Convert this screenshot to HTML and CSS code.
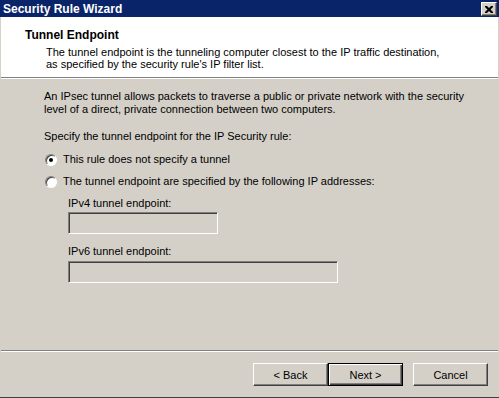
FILE: index.html
```html
<!DOCTYPE html>
<html lang="en">
<head>
<meta charset="UTF-8">
<title>Security Rule Wizard</title>
<link rel="stylesheet" href="styles.css">
</head>
<body>

  <div class="window">
    <div class="titlebar">
      <span class="title">Security Rule Wizard</span>
      <button class="close-btn">
        <svg width="8" height="7" viewBox="0 0 8 7"><path d="M0 0h2l2 2 2-2h2v1l-2.5 2.5L8 6v1H6L4 5 2 7H0V6l2.5-2.5L0 1z" fill="#000"/></svg>
      </button>
    </div>

    <div class="header">
      <div class="header-title">Tunnel Endpoint</div>
      <div class="header-desc">
        The tunnel endpoint is the tunneling computer closest to the IP traffic destination,<br>
        as specified by the security rule's IP filter list.
      </div>
    </div>
    <div class="separator"></div>

    <div class="content">
      <p class="intro">
        An IPsec tunnel allows packets to traverse a public or private network with the security<br>
        level of a direct, private connection between two computers.
      </p>
      <p class="prompt">Specify the tunnel endpoint for the IP Security rule:</p>

      <label class="radio-row first">
        <span class="radio checked"></span>
        This rule does not specify a tunnel
      </label>
      <label class="radio-row">
        <span class="radio"></span>
        The tunnel endpoint are specified by the following IP addresses:
      </label>

      <div class="fields">
        <div class="field-label">IPv4 tunnel endpoint:</div>
        <div class="textbox short"></div>
        <div class="field-label second">IPv6 tunnel endpoint:</div>
        <div class="textbox long"></div>
      </div>
    </div>

    <div class="separator"></div>
    <div class="footer">
      <button class="button">&lt; Back</button>
      <button class="button default">Next &gt;</button>
      <button class="button cancel">Cancel</button>
    </div>
  </div>

</body>
</html>
```

FILE: styles.css
```css
body {
  margin: 0;
  font-family: "Liberation Sans", Arial, sans-serif;
  font-size: 11px;
  color: #000;
}

.window {
  width: 499px;
  height: 398px;
  box-sizing: border-box;
  background-color: #d4d0c8;
  border-bottom: 1px solid #404040;
  display: flex;
  flex-direction: column;
}

.titlebar {
  height: 17px;
  background-color: #0a246a;
  color: white;
  display: flex;
  justify-content: space-between;
  align-items: center;
  padding: 0 2px 0 3px;
}
.title {
  font-weight: bold;
  font-size: 12px;
}
.close-btn {
  width: 16px;
  height: 14px;
  padding: 0;
  margin-top: 1px;
  background-color: #d4d0c8;
  border: 1px solid;
  border-color: #fff #404040 #404040 #fff;
  box-shadow: inset -1px -1px 0 #808080;
  display: flex;
  align-items: center;
  justify-content: center;
}

.header {
  height: 60px;
  box-sizing: border-box;
  background-color: white;
  padding: 12px 0 0 24px;
  line-height: 12px;
  margin: 0 1px;
}
.header-title {
  font-weight: bold;
  font-size: 12px;
}
.header-desc {
  margin-top: 5px;
  padding-left: 21px;
  white-space: nowrap;
}

.separator {
  height: 1px;
  background-color: #808080;
  border-bottom: 1px solid white;
  margin: 0 1px;
}

.content {
  flex: 1;
  padding: 11px 0 0 44px;
  line-height: 13px;
  white-space: nowrap;
}
.content p {
  margin: 0;
}
.prompt {
  margin-top: 14px !important;
}

.radio-row {
  display: flex;
  align-items: center;
  gap: 6px;
  margin-top: 9px;
  padding-left: 1px;
}
.radio-row.first {
  margin-top: 10px;
}
.radio {
  width: 12px;
  height: 12px;
  box-sizing: border-box;
  border-radius: 50%;
  border: 1px solid;
  border-color: #808080 #fff #fff #808080;
  background-color: white;
  box-shadow: inset 1px 1px 0 #404040;
  display: flex;
  align-items: center;
  justify-content: center;
}
.radio.checked::after {
  content: "";
  width: 4px;
  height: 4px;
  border-radius: 50%;
  background-color: #000;
}

.fields {
  padding-left: 24px;
  margin-top: 9px;
}
.field-label {
  margin-bottom: 2px;
}
.field-label.second {
  margin-top: 11px;
  margin-bottom: 3px;
}
.textbox {
  height: 22px;
  box-sizing: border-box;
  border: 1px solid;
  border-color: #808080 #fff #fff #808080;
  box-shadow: inset 1px 1px 0 #404040;
  background-color: #d4d0c8;
}
.textbox.short {
  width: 150px;
}
.textbox.long {
  width: 270px;
}

.footer {
  height: 45px;
  box-sizing: border-box;
  display: flex;
  justify-content: flex-end;
  padding: 11px 11px 0 0;
}
.button {
  width: 75px;
  height: 23px;
  box-sizing: border-box;
  font-family: "Liberation Sans", Arial, sans-serif;
  font-size: 11px;
  color: #000;
  background-color: #d4d0c8;
  border: 1px solid;
  border-color: #fff #404040 #404040 #fff;
  box-shadow: inset -1px -1px 0 #808080;
  padding: 0;
}
.button.default {
  border-color: #000;
  box-shadow: inset 1px 1px 0 #fff, inset -1px -1px 0 #404040, inset -2px -2px 0 #808080;
}
.button.cancel {
  margin-left: 10px;
}
```
